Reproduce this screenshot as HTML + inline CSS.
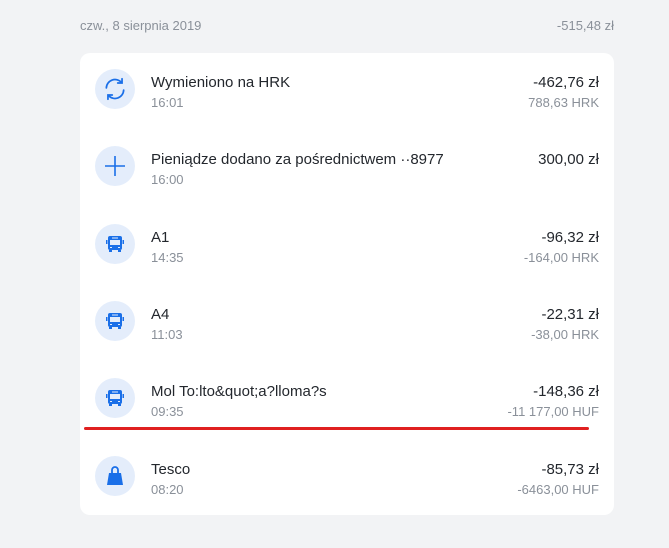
<!DOCTYPE html>
<html><head><meta charset="utf-8"><style>
*{margin:0;padding:0;box-sizing:border-box}
body{width:669px;height:548px;background:#f2f3f5;font-family:"Liberation Sans","DejaVu Sans",sans-serif;position:relative;overflow:hidden}
.hdr{position:absolute;top:18px;font-size:13px;color:#8a9099}
.card{position:absolute;left:80px;top:53px;width:534px;height:462px;background:#fff;border-radius:10px}
.row{position:absolute;left:0;width:534px;height:60px}
.ic{position:absolute;left:15px;top:0;width:40px;height:40px;border-radius:50%;background:#e4edfb;display:flex;align-items:center;justify-content:center}
.t{position:absolute;left:71px;top:5px;font-size:15px;color:#23272d}
.s{position:absolute;left:71px;top:26px;font-size:13px;color:#8a9099}
.a{position:absolute;right:15px;top:5px;font-size:15px;color:#23272d}
.b{position:absolute;right:15px;top:26px;font-size:13px;color:#8a9099}
.red{position:absolute;left:84px;top:427px;width:505px;height:3px;background:#e02020;border-radius:2px}
</style></head><body>
<div class="hdr" style="left:80px">czw., 8 sierpnia 2019</div>
<div class="hdr" style="right:55px">-515,48 zł</div>
<div class="card">
<div class="row" style="top:16px"><div class="ic"><svg width="26" height="26" viewBox="0 0 24 24" fill="none" stroke="#1a6fe8" stroke-width="1.6" stroke-linecap="round"><path d="M4 11a8 8 0 0 1 14-5"/><path d="M18.5 2.5v4h-4"/><path d="M20 13a8 8 0 0 1-14 5"/><path d="M5.5 21.5v-4h4"/></svg></div><div class="t">Wymieniono na HRK</div><div class="s">16:01</div><div class="a">-462,76 zł</div><div class="b">788,63 HRK</div></div>
<div class="row" style="top:93px"><div class="ic"><svg width="24" height="24" viewBox="0 0 24 24" stroke="#1a6fe8" stroke-width="1.6"><path d="M12 2v20M2 12h20"/></svg></div><div class="t">Pieniądze dodano za pośrednictwem ··8977</div><div class="s">16:00</div><div class="a">300,00 zł</div></div>
<div class="row" style="top:171px"><div class="ic"><svg width="20" height="20" viewBox="0 0 20 20"><rect x="3" y="2" width="14" height="14" rx="2" fill="#1a6fe8"/><rect x="1" y="6" width="1.5" height="4" fill="#1a6fe8"/><rect x="17.5" y="6" width="1.5" height="4" fill="#1a6fe8"/><rect x="5" y="6" width="10" height="5" fill="#e4edfb"/><rect x="7" y="3.5" width="6" height="1" fill="#e4edfb"/><rect x="4" y="16" width="3" height="2" fill="#1a6fe8"/><rect x="13" y="16" width="3" height="2" fill="#1a6fe8"/><rect x="5" y="13" width="2" height="1" fill="#e4edfb"/><rect x="13" y="13" width="2" height="1" fill="#e4edfb"/></svg></div><div class="t">A1</div><div class="s">14:35</div><div class="a">-96,32 zł</div><div class="b">-164,00 HRK</div></div>
<div class="row" style="top:248px"><div class="ic"><svg width="20" height="20" viewBox="0 0 20 20"><rect x="3" y="2" width="14" height="14" rx="2" fill="#1a6fe8"/><rect x="1" y="6" width="1.5" height="4" fill="#1a6fe8"/><rect x="17.5" y="6" width="1.5" height="4" fill="#1a6fe8"/><rect x="5" y="6" width="10" height="5" fill="#e4edfb"/><rect x="7" y="3.5" width="6" height="1" fill="#e4edfb"/><rect x="4" y="16" width="3" height="2" fill="#1a6fe8"/><rect x="13" y="16" width="3" height="2" fill="#1a6fe8"/><rect x="5" y="13" width="2" height="1" fill="#e4edfb"/><rect x="13" y="13" width="2" height="1" fill="#e4edfb"/></svg></div><div class="t">A4</div><div class="s">11:03</div><div class="a">-22,31 zł</div><div class="b">-38,00 HRK</div></div>
<div class="row" style="top:325px"><div class="ic"><svg width="20" height="20" viewBox="0 0 20 20"><rect x="3" y="2" width="14" height="14" rx="2" fill="#1a6fe8"/><rect x="1" y="6" width="1.5" height="4" fill="#1a6fe8"/><rect x="17.5" y="6" width="1.5" height="4" fill="#1a6fe8"/><rect x="5" y="6" width="10" height="5" fill="#e4edfb"/><rect x="7" y="3.5" width="6" height="1" fill="#e4edfb"/><rect x="4" y="16" width="3" height="2" fill="#1a6fe8"/><rect x="13" y="16" width="3" height="2" fill="#1a6fe8"/><rect x="5" y="13" width="2" height="1" fill="#e4edfb"/><rect x="13" y="13" width="2" height="1" fill="#e4edfb"/></svg></div><div class="t">Mol To:lto&amp;quot;a?lloma?s</div><div class="s">09:35</div><div class="a">-148,36 zł</div><div class="b">-11 177,00 HUF</div></div>
<div class="row" style="top:403px"><div class="ic"><svg width="20" height="22" viewBox="0 0 20 22"><path d="M7 8V5a3 3 0 0 1 6 0v3" fill="none" stroke="#1a6fe8" stroke-width="1.8"/><path d="M4 8h12l2 12H2z" fill="#1a6fe8"/></svg></div><div class="t">Tesco</div><div class="s">08:20</div><div class="a">-85,73 zł</div><div class="b">-6463,00 HUF</div></div>
</div>
<div class="red"></div>
</body></html>
